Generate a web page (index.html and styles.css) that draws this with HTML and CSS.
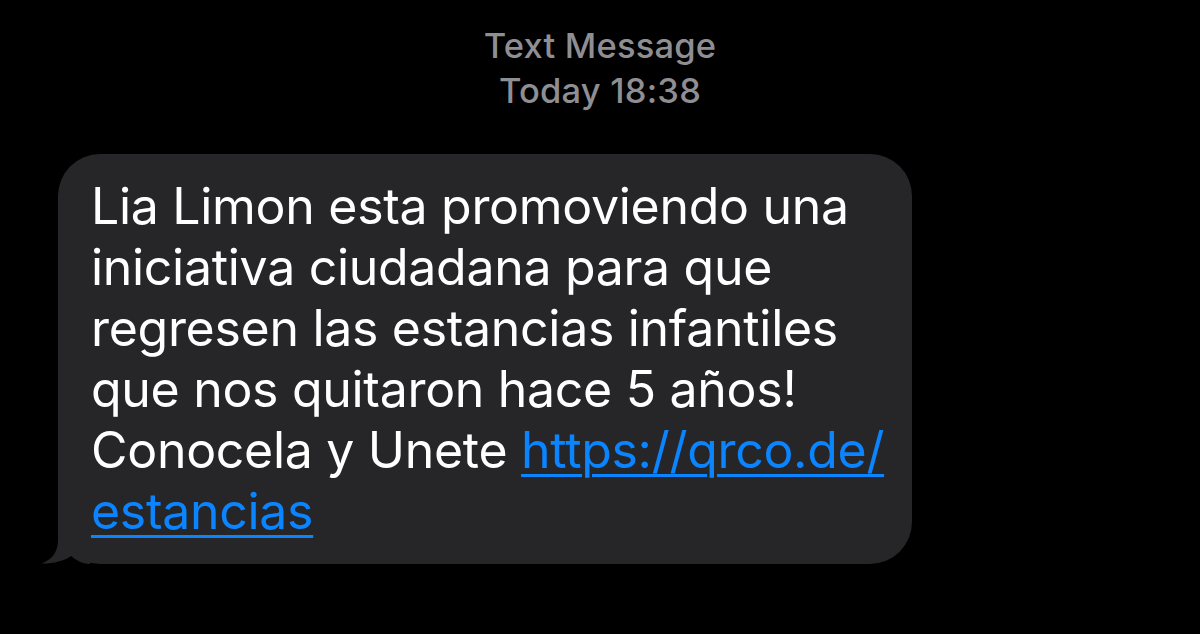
FILE: index.html
```html
<!DOCTYPE html>
<html lang="es">
<head>
  <meta charset="UTF-8" />
  <title>Text Message</title>
  <link rel="stylesheet" href="styles.css">
</head>
<body>
  <div class="thread">
    <div class="stamp">
      <div class="stamp-kind">Text Message</div>
      <div class="stamp-time">Today 18:38</div>
    </div>

    <div class="bubble">
      <p class="bubble-text">Lia Limon esta promoviendo una<br>iniciativa ciudadana para que<br>regresen las estancias infantiles<br>que nos quitaron hace 5 años!<br>Conocela y Unete <a href="#">https://qrco.de/<br>estancias</a></p>
      <!-- colita del globo -->
      <svg class="bubble-tail" width="50" height="45" viewBox="0 0 50 45">
        <path d="M18 1 L18 21 C18 33 12 41 1 44.5 C12 45 24 42 31 37 C36 41 42 45 50 45 L50 1 Z" fill="#262628"/>
      </svg>
    </div>
  </div>
</body>
</html>
```

FILE: styles.css
```css
*{margin:0;padding:0;box-sizing:border-box}

body{
  background:#000;
  font-family:Inter,'Liberation Sans',sans-serif;
  width:1200px;height:634px;overflow:hidden
}

.thread{padding:23px 0 0 58px;display:flex;flex-direction:column}

/* === Cabecera fecha === */
.stamp{
  margin-left:-58px;width:1200px;text-align:center;color:#8e8e93;
  font-size:34.5px;line-height:45px;font-weight:500;letter-spacing:.2px
}

/* === Globo === */
.bubble{
  position:relative;margin-top:41px;width:854px;
  background:#262628;border-radius:42px;
  padding:22px 20px 22px 33px
}
.bubble-text{
  color:#fff;font-size:50px;line-height:61px;letter-spacing:-.3px;
  white-space:nowrap
}
.bubble-text a{
  color:#0a84ff;text-decoration:underline;
  text-decoration-thickness:3px;text-underline-offset:6px
}
.bubble-tail{position:absolute;left:-18px;bottom:0}
```
